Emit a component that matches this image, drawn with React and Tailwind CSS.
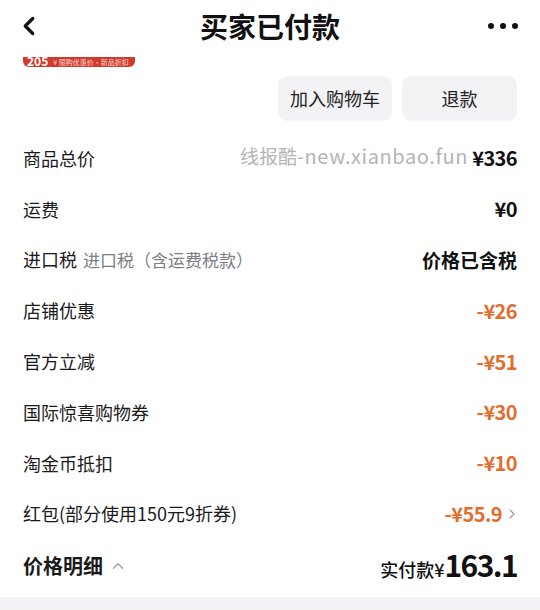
import { ChevronLeft, ChevronRight, ChevronUp } from 'lucide-react';

// Order detail: paid by buyer, price breakdown
const rows = [
  { label: '商品总价', value: '¥336' },
  { label: '运费', value: '¥0' },
  { label: '进口税', note: '进口税（含运费税款）', value: '价格已含税', cjk: true },
  { label: '店铺优惠', value: '-¥26', orange: true },
  { label: '官方立减', value: '-¥51', orange: true },
  { label: '国际惊喜购物券', value: '-¥30', orange: true },
  { label: '淘金币抵扣', value: '-¥10', orange: true },
  { label: '红包(部分使用150元9折券)', value: '-¥55.9', orange: true, arrow: true },
];

export default function App() {
  return (
    <div
      className="w-[540px] h-[610px] bg-white overflow-hidden flex flex-col text-[#1a1a1a]"
      style={{ fontFamily: '"Noto Sans CJK SC", "Noto Sans", sans-serif' }}
    >
      {/* top bar */}
      <div className="relative h-[52px] shrink-0 flex items-center justify-between pl-[14px] pr-[22px]">
        <ChevronLeft size={30} strokeWidth={2.6} className="text-[#111]" />
        <div className="absolute left-0 right-0 top-[5px] text-center text-[28px] font-bold leading-[42px] text-[#111]">买家已付款</div>
        <div className="flex gap-[6px]">
          <span className="w-[6px] h-[6px] rounded-full bg-[#111]" />
          <span className="w-[6px] h-[6px] rounded-full bg-[#111]" />
          <span className="w-[6px] h-[6px] rounded-full bg-[#111]" />
        </div>
      </div>

      {/* clipped red banner */}
      <div className="h-[24px] shrink-0 pl-[23px] pt-[5px]">
        <div className="w-[112px] h-[10px] bg-[#d23a2c] rounded-b-[6px] overflow-hidden flex items-end gap-[5px] px-[4px] text-white whitespace-nowrap">
          <span className="text-[12px] font-bold leading-[12px]">205</span>
          <span className="text-[7px] leading-[9px] opacity-80">¥ 限购优惠价·新品折扣</span>
        </div>
      </div>

      {/* action buttons */}
      <div className="flex justify-end gap-[10px] pr-[23px] shrink-0">
        <div className="w-[114px] h-[45px] rounded-[9px] bg-[#f3f3f5] flex items-center justify-center text-[18px] text-[#222]">加入购物车</div>
        <div className="w-[115px] h-[45px] rounded-[9px] bg-[#f3f3f5] flex items-center justify-center text-[18px] text-[#222]">退款</div>
      </div>

      {/* price rows */}
      <div className="mt-[12px] flex flex-col">
        {rows.map((r, i) => (
          <div key={i} className="relative h-[50.8px] flex items-center justify-between pl-[23px] pr-[23px]">
            <div className="flex items-center gap-[6px] text-[18px]">
              <span>{r.label}</span>
              {r.note && <span className="text-[#7d7d85] text-[17px]">{r.note}</span>}
            </div>
            {i === 0 && (
              <span className="absolute left-[240px] top-[9px] text-[#b4b4b4] leading-[28px] whitespace-nowrap">
                <span className="text-[19px]">线报酷</span>
                <span className="text-[20px] tracking-[0.6px]">-new.xianbao.fun</span>
              </span>
            )}
            <div className="relative flex items-center gap-[2px] bg-white pl-[2px]">
              <span
                className={`font-bold ${r.cjk ? 'text-[19px]' : 'text-[20px] tracking-[-0.6px]'} ${r.orange ? 'text-[#e36d2d]' : 'text-[#111]'}`}
              >
                {r.value}
              </span>
              {r.arrow && <ChevronRight size={16} strokeWidth={1.6} className="text-[#999] -mr-[3px]" />}
            </div>
          </div>
        ))}
        {/* summary */}
        <div className="h-[54px] flex items-center justify-between pl-[23px] pr-[23px]">
          <div className="flex items-center gap-[6px]">
            <span className="text-[20px] font-bold">价格明细</span>
            <ChevronUp size={18} strokeWidth={1.6} className="text-[#999]" />
          </div>
          <div className="flex items-baseline text-[#111]">
            <span className="text-[18px] font-medium">实付款¥</span>
            <span className="text-[30px] font-bold leading-none tracking-[-1.6px]">163.1</span>
          </div>
        </div>
      </div>

      <div className="flex-1 bg-[#f3f3f6] mt-[4px]" />
    </div>
  );
}
